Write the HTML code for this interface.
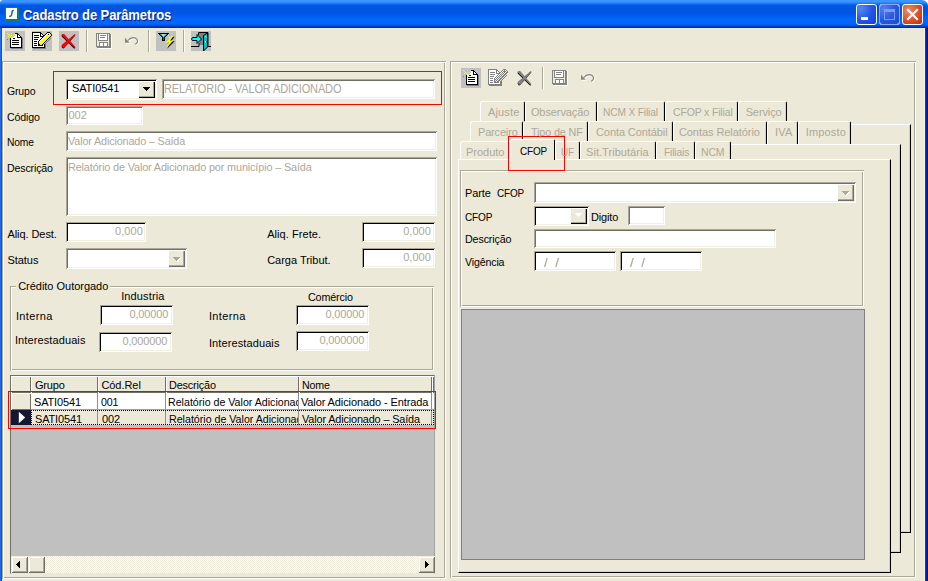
<!DOCTYPE html>
<html><head><meta charset="utf-8"><title>Cadastro de Parâmetros</title>
<style>
html,body{margin:0;padding:0}
body{width:928px;height:581px;overflow:hidden;background:#ECE9D8;position:relative;font-family:"Liberation Sans", sans-serif;font-size:11px}
#w div{position:absolute;box-sizing:border-box}
#w span{position:absolute;white-space:pre;transform-origin:0 0}
#w svg{position:absolute;overflow:visible}
</style></head><body><div id="w">
<div style="left:0px;top:0px;width:928px;height:8px;background:#fff;"></div>
<div style="left:0px;top:0px;width:928px;height:28px;background:linear-gradient(to bottom,#3D95FF 0px,#3A93FF 2px,#1B78F8 3.5px,#0058E6 5.5px,#0054DE 9px,#0057E5 14px,#0061F8 17px,#0068FF 20px,#0066FC 24px,#0052DD 25.5px,#0035B0 27px,#002A9A 28px);border-radius:3px 6px 0 0;"></div>
<div style="left:0px;top:28px;width:1px;height:553px;background:#1C6CF0;"></div>
<div style="left:1px;top:28px;width:1px;height:553px;background:#0453E2;"></div>
<div style="left:924px;top:28px;width:1px;height:553px;background:#FBF4D8;"></div>
<div style="left:925px;top:28px;width:1px;height:553px;background:#0838DD;"></div>
<div style="left:926px;top:28px;width:1px;height:553px;background:#0021B0;"></div>
<div style="left:927px;top:28px;width:1px;height:553px;background:#00138C;"></div>
<div style="left:5px;top:7px;width:14px;height:14px;background:#fff;border:1px solid #0F7B68;border-right-width:2px;border-bottom-width:2px;"><svg width="11" height="11" style="left:0;top:0"><path d="M7.800 2.400C6.300 2.200 6.100 3.300 6 4.500C5.900 6 5.800 7.300 5 7.800C4.400 8.200 3.800 8.300 3.100 8.500" stroke="#0F6B5C" stroke-width="1.500" fill="none"/></svg></div>
<div style="left:856px;top:4px;width:21px;height:21px;background:radial-gradient(circle at 20% 20%,#5a86f2,#2458e8 50%,#1040d4);border:1px solid #fff;border-radius:3px;"><div style="left:4px;top:12px;width:7px;height:3px;background:#fff"></div></div>
<div style="left:879px;top:4px;width:21px;height:21px;background:radial-gradient(circle at 20% 20%,#5580ee,#2a5ae0 50%,#1c48d0);border:1px solid #fff;border-radius:3px;"><div style="left:4px;top:4px;width:11px;height:11px;border:1px solid #7d9be8;border-top:3px solid #7d9be8"></div></div>
<div style="left:879px;top:4px;width:21px;height:21px;border:1px solid #8fa8ea;border-radius:3px;"></div>
<div style="left:902px;top:4px;width:21px;height:21px;background:radial-gradient(circle at 30% 30%,#ee8a6a,#d8502a 55%,#b8320f);border:1px solid #fff;border-radius:3px;"><svg width="19" height="19" style="left:0;top:0"><path d="M5 5l9 9M14 5l-9 9" stroke="#fff" stroke-width="2.2" stroke-linecap="square"/></svg></div>
<div style="left:5px;top:31px;width:20px;height:20px;background:#C0C0C0;"><svg width="20" height="20" viewBox="0 0 20 20" style="left:0;top:0" shape-rendering="crispEdges"><path fill="#ffff00" d="M2 2h1v1h-1zM6 2h1v1h-1zM3 3h1v1h-1zM9 3h1v1h-1zM4 4h1v1h-1zM6 4h1v1h-1zM8 4h1v1h-1zM3 5h1v1h-1zM5 5h1v1h-1zM6 6h2v1h-2zM6 8h1v1h-1z"/><path fill="#000" d="M10 2h3v1h-3zM12 3h2v1h-2zM12 4h1v1h-1zM14 4h1v1h-1zM12 5h1v1h-1zM15 5h1v1h-1zM12 6h5v1h-5zM5 7h1v1h-1zM8 7h2v1h-2zM16 7h1v1h-1zM5 8h1v1h-1zM16 8h1v1h-1zM5 9h1v1h-1zM7 9h7v1h-7zM16 9h1v1h-1zM5 10h1v1h-1zM16 10h1v1h-1zM5 11h1v1h-1zM7 11h7v1h-7zM16 11h1v1h-1zM5 12h1v1h-1zM16 12h1v1h-1zM5 13h1v1h-1zM7 13h7v1h-7zM16 13h1v1h-1zM5 14h1v1h-1zM16 14h1v1h-1zM5 15h1v1h-1zM16 15h1v1h-1zM5 16h12v1h-12z"/><path fill="#fff" d="M10 3h2v1h-2zM10 4h2v1h-2zM13 4h1v1h-1zM9 5h3v1h-3zM13 5h2v1h-2zM8 6h4v1h-4zM6 7h2v1h-2zM10 7h6v1h-6zM7 8h9v1h-9zM6 9h1v1h-1zM14 9h2v1h-2zM6 10h10v1h-10zM6 11h1v1h-1zM14 11h2v1h-2zM6 12h10v1h-10zM6 13h1v1h-1zM14 13h2v1h-2zM6 14h10v1h-10zM6 15h10v1h-10z"/><path fill="#808080" d="M17 7h1v1h-1zM2 8h1v1h-1zM17 8h1v1h-1zM17 9h1v1h-1zM17 10h1v1h-1zM17 11h1v1h-1zM17 12h1v1h-1zM17 13h1v1h-1zM17 14h1v1h-1zM17 15h1v1h-1zM17 16h1v1h-1zM6 17h12v1h-12z"/></svg></div>
<div style="left:32px;top:31px;width:20px;height:20px;background:#C0C0C0;"><svg width="20" height="20" viewBox="0 0 20 20" style="left:0;top:0" shape-rendering="crispEdges"><path fill="#000" d="M0 1h9v1h-9zM15 1h3v1h-3zM0 2h1v1h-1zM8 2h2v1h-2zM14 2h1v1h-1zM18 2h1v1h-1zM0 3h1v1h-1zM8 3h1v1h-1zM10 3h1v1h-1zM13 3h1v1h-1zM16 3h1v1h-1zM19 3h1v1h-1zM0 4h1v1h-1zM2 4h5v1h-5zM8 4h1v1h-1zM11 4h2v1h-2zM19 4h1v1h-1zM0 5h1v1h-1zM8 5h4v1h-4zM18 5h1v1h-1zM0 6h1v1h-1zM2 6h5v1h-5zM10 6h1v1h-1zM17 6h1v1h-1zM0 7h1v1h-1zM9 7h1v1h-1zM16 7h1v1h-1zM0 8h1v1h-1zM2 8h4v1h-4zM8 8h1v1h-1zM15 8h1v1h-1zM0 9h1v1h-1zM7 9h1v1h-1zM14 9h1v1h-1zM0 10h1v1h-1zM2 10h3v1h-3zM6 10h1v1h-1zM13 10h1v1h-1zM0 11h1v1h-1zM6 11h1v1h-1zM12 11h1v1h-1zM0 12h1v1h-1zM2 12h3v1h-3zM6 12h1v1h-1zM11 12h1v1h-1zM0 13h1v1h-1zM6 13h2v1h-2zM10 13h1v1h-1zM12 13h1v1h-1zM0 14h1v1h-1zM2 14h3v1h-3zM6 14h5v1h-5zM12 14h1v1h-1zM0 15h1v1h-1zM12 15h1v1h-1zM0 16h13v1h-13z"/><path fill="#fff" d="M1 2h7v1h-7zM1 3h7v1h-7zM9 3h1v1h-1zM14 3h1v1h-1zM1 4h1v1h-1zM7 4h1v1h-1zM9 4h2v1h-2zM13 4h1v1h-1zM1 5h7v1h-7zM12 5h1v1h-1zM1 6h1v1h-1zM7 6h3v1h-3zM11 6h1v1h-1zM1 7h8v1h-8zM10 7h1v1h-1zM1 8h1v1h-1zM6 8h2v1h-2zM9 8h1v1h-1zM1 9h6v1h-6zM8 9h1v1h-1zM1 10h1v1h-1zM5 10h1v1h-1zM7 10h1v1h-1zM1 11h5v1h-5zM1 12h1v1h-1zM5 12h1v1h-1zM1 13h5v1h-5zM1 14h1v1h-1zM5 14h1v1h-1zM11 14h1v1h-1zM1 15h11v1h-11z"/><path fill="#ffff00" d="M15 2h3v1h-3zM15 3h1v1h-1zM17 3h2v1h-2zM14 4h5v1h-5zM13 5h5v1h-5zM12 6h5v1h-5zM11 7h5v1h-5zM10 8h5v1h-5zM9 9h5v1h-5zM8 10h5v1h-5zM7 11h5v1h-5zM7 12h4v1h-4zM8 13h2v1h-2z"/><path fill="#808080" d="M18 7h1v1h-1zM17 8h1v1h-1zM16 9h1v1h-1zM15 10h1v1h-1zM14 11h1v1h-1zM13 12h1v1h-1zM13 13h1v1h-1zM13 14h1v1h-1zM13 15h1v1h-1zM13 16h1v1h-1zM1 17h13v1h-13z"/></svg></div>
<div style="left:59px;top:31px;width:20px;height:20px;background:#C0C0C0;"><svg width="20" height="20" viewBox="0 0 20 20" style="left:0;top:0" shape-rendering="crispEdges"><g shape-rendering="geometricPrecision"><path d="M3 3h2.200l11 12.800v.900h-.900l-12.300-12zM15.800 3l.800.800l-11.400 12.700l-.900.200l-1.300-1.300v-1.700z" fill="#000" transform="translate(-.3,.7)"/><path d="M3 3h2.200l11 12.800v.900h-.900l-12.300-12zM15.800 3l.800.800l-11.400 12.700l-.900.200l-1.300-1.300v-1.700z" fill="#ff0000"/></g></svg></div>
<div style="left:86px;top:30px;width:1px;height:22px;background:#ACA899;"></div>
<div style="left:87px;top:30px;width:1px;height:22px;background:#FFFFFF;"></div>
<div style="left:93px;top:31px;width:20px;height:20px;"><svg width="20" height="20" viewBox="0 0 20 20" style="left:0;top:0" shape-rendering="crispEdges"><path fill="#848480" d="M3 2h14v1h-14zM3 3h1v1h-1zM5 3h1v1h-1zM14 3h1v1h-1zM16 3h2v1h-2zM3 4h1v1h-1zM5 4h1v1h-1zM7 4h6v1h-6zM14 4h1v1h-1zM16 4h2v1h-2zM3 5h1v1h-1zM5 5h1v1h-1zM14 5h1v1h-1zM16 5h2v1h-2zM3 6h1v1h-1zM5 6h1v1h-1zM7 6h5v1h-5zM14 6h1v1h-1zM16 6h2v1h-2zM3 7h1v1h-1zM5 7h1v1h-1zM14 7h1v1h-1zM16 7h2v1h-2zM3 8h1v1h-1zM5 8h1v1h-1zM14 8h1v1h-1zM16 8h2v1h-2zM3 9h1v1h-1zM5 9h10v1h-10zM16 9h2v1h-2zM3 10h1v1h-1zM16 10h2v1h-2zM3 11h1v1h-1zM6 11h9v1h-9zM16 11h2v1h-2zM3 12h1v1h-1zM6 12h1v1h-1zM10 12h1v1h-1zM14 12h1v1h-1zM16 12h2v1h-2zM3 13h1v1h-1zM6 13h1v1h-1zM10 13h1v1h-1zM14 13h1v1h-1zM16 13h2v1h-2zM3 14h1v1h-1zM6 14h1v1h-1zM10 14h1v1h-1zM14 14h1v1h-1zM16 14h2v1h-2zM3 15h15v1h-15zM4 16h14v1h-14z"/><path fill="#fff" d="M6 3h8v1h-8zM18 3h1v1h-1zM6 4h1v1h-1zM13 4h1v1h-1zM18 4h1v1h-1zM6 5h8v1h-8zM18 5h1v1h-1zM6 6h1v1h-1zM12 6h2v1h-2zM18 6h1v1h-1zM6 7h8v1h-8zM18 7h1v1h-1zM6 8h8v1h-8zM18 8h1v1h-1zM18 9h1v1h-1zM18 10h1v1h-1zM18 11h1v1h-1zM7 12h3v1h-3zM11 12h3v1h-3zM18 12h1v1h-1zM7 13h3v1h-3zM11 13h3v1h-3zM18 13h1v1h-1zM7 14h3v1h-3zM11 14h3v1h-3zM18 14h1v1h-1zM18 15h1v1h-1zM18 16h1v1h-1zM5 17h14v1h-14z"/></svg></div>
<div style="left:0px;top:0px;width:0px;height:0px;"></div>
<div style="left:125px;top:37px;width:20px;height:20px;"><svg width="20" height="20" viewBox="0 0 20 20" style="left:0;top:0" shape-rendering="crispEdges"><g shape-rendering="geometricPrecision"><g transform="translate(1,1)"><path d="M0 .800l4.700 5h-4.700z" fill="#fff"/><path d="M3 3.500C4.500 1.500 7 .300 9.500 .800S13 3.500 12.300 5.200S10.800 6.800 10 7.200" fill="none" stroke="#fff" stroke-width="1.200"/></g><path d="M0 .800l4.700 5h-4.700z" fill="#848480"/><path d="M3 3.500C4.500 1.500 7 .300 9.500 .800S13 3.500 12.300 5.200S10.800 6.800 10 7.200" fill="none" stroke="#848480" stroke-width="1.200"/></g></svg></div>
<div style="left:148px;top:30px;width:1px;height:22px;background:#ACA899;"></div>
<div style="left:149px;top:30px;width:1px;height:22px;background:#FFFFFF;"></div>
<div style="left:156px;top:31px;width:20px;height:20px;background:#C0C0C0;"><svg width="20" height="20" viewBox="0 0 20 20" style="left:0;top:0" shape-rendering="crispEdges"><g shape-rendering="crispEdges"><path fill="#000" d="M2 2h11v1h-11zM3 3h1v1h-1zM11 3h1v1h-1zM4 4h1v1h-1zM10 4h1v1h-1zM5 5h1v1h-1zM9 5h1v1h-1zM6 6h1v1h-1zM8 6h1v1h-1zM6 7h1v1h-1zM8 7h1v1h-1zM6 8h1v1h-1zM8 8h1v1h-1zM6 9h3v1h-3z"/><path fill="#008080" d="M4 3h1v1h-1zM10 3h1v1h-1zM5 4h1v1h-1zM9 4h1v1h-1zM6 5h1v1h-1zM8 5h1v1h-1zM7 6h1v1h-1zM7 7h1v1h-1zM7 8h1v1h-1z"/></g><g shape-rendering="geometricPrecision"><path d="M9.500 10.500l1 1.500M12.500 4.500l1.500 3.500" stroke="#e4e4e4" stroke-width="1"/><path d="M15.500 5h2l-3.500 4.500h3.500l-7.500 7.500l2.800-5.500h-2.500z" fill="#000" transform="translate(1.100,.800)"/><path d="M15.500 5h2l-3.500 4.500h3.500l-7.500 7.500l2.800-5.500h-2.500z" fill="#ffff00"/></g></svg></div>
<div style="left:183px;top:30px;width:1px;height:22px;background:#ACA899;"></div>
<div style="left:184px;top:30px;width:1px;height:22px;background:#FFFFFF;"></div>
<div style="left:191px;top:31px;width:20px;height:20px;background:#C0C0C0;"><svg width="20" height="20" viewBox="0 0 20 20" style="left:0;top:0" shape-rendering="crispEdges"><g shape-rendering="geometricPrecision"><path d="M8 2h8v12h-8z" fill="#808080"/><path d="M7.500 4v-2.500h9.500v14.500" fill="none" stroke="#000" stroke-width="1"/><path d="M0 15.500h8v-3.500M17 15.500h3" fill="none" stroke="#000" stroke-width="1"/><path d="M12.500 4.500l4-2.500v14l-4 4z" fill="#00c0c0" stroke="#000" stroke-width="1"/><path d="M13.500 5.500l2-1.300v3z" fill="#00ffff"/><path d="M14 10h1v1.500h-1z" fill="#fff"/><path d="M15 10h.7v1.500h-.7z" fill="#004080"/><path d="M1.500 6.500h4.500v-3l4.500 4.500-4.500 4.500v-3h-4.500l-1-1.500z" fill="#00ffff" stroke="#000" stroke-width="1" stroke-linejoin="round"/></g></svg></div>
<div style="left:2px;top:61px;width:444px;height:518px;box-shadow:inset 1px 1px 0 #ACA899,inset -1px -1px 0 #FFFFFF,inset 2px 2px 0 #FFFFFF,inset -2px -2px 0 #ACA899;"></div>
<div style="left:66px;top:79px;width:91px;height:21px;background:#FFFFFF;box-shadow:inset 1px 1px 0 #ACA899,inset -1px -1px 0 #FFFFFF,inset 2px 2px 0 #000,inset -2px -2px 0 #F1EFE2;"></div>
<div style="left:138px;top:81px;width:17px;height:17px;background:#ECE9D8;box-shadow:inset 1px 1px 0 #FFFFFF,inset -1px -1px 0 #000,inset -2px -2px 0 #ACA899;"><svg width="17" height="17" style="position:absolute;left:0;top:0" shape-rendering="crispEdges"><path d="M5 6h7v1h-7zM6 7h5v1h-5zM7 8h3v1h-3zM8 9h1v1h-1z" fill="#000"/></svg></div>
<div style="left:162px;top:79px;width:273px;height:20px;background:#FFFFFF;box-shadow:inset 1px 1px 0 #ACA899,inset -1px -1px 0 #FFFFFF,inset 2px 2px 0 #716F64,inset -2px -2px 0 #F1EFE2;"></div>
<div style="left:66px;top:106px;width:77px;height:19px;background:#FFFFFF;box-shadow:inset 1px 1px 0 #ACA899,inset -1px -1px 0 #FFFFFF,inset 2px 2px 0 #716F64,inset -2px -2px 0 #F1EFE2;"></div>
<div style="left:66px;top:131px;width:371px;height:20px;background:#FFFFFF;box-shadow:inset 1px 1px 0 #ACA899,inset -1px -1px 0 #FFFFFF,inset 2px 2px 0 #716F64,inset -2px -2px 0 #F1EFE2;"></div>
<div style="left:66px;top:157px;width:371px;height:59px;background:#FFFFFF;box-shadow:inset 1px 1px 0 #ACA899,inset -1px -1px 0 #FFFFFF,inset 2px 2px 0 #716F64,inset -2px -2px 0 #F1EFE2;"></div>
<div style="left:66px;top:222px;width:80px;height:20px;background:#FFFFFF;box-shadow:inset 1px 1px 0 #ACA899,inset -1px -1px 0 #FFFFFF,inset 2px 2px 0 #000,inset -2px -2px 0 #F1EFE2;"></div>
<div style="left:362px;top:222px;width:73px;height:20px;background:#FFFFFF;box-shadow:inset 1px 1px 0 #ACA899,inset -1px -1px 0 #FFFFFF,inset 2px 2px 0 #000,inset -2px -2px 0 #F1EFE2;"></div>
<div style="left:66px;top:248px;width:121px;height:21px;background:#FFFFFF;box-shadow:inset 1px 1px 0 #ACA899,inset -1px -1px 0 #FFFFFF,inset 2px 2px 0 #716F64,inset -2px -2px 0 #F1EFE2;"></div>
<div style="left:168px;top:250px;width:17px;height:17px;background:#ECE9D8;box-shadow:inset 1px 1px 0 #FFFFFF,inset -1px -1px 0 #716F64,inset -2px -2px 0 #ACA899;"><svg width="17" height="17" style="position:absolute;left:0;top:0" shape-rendering="crispEdges"><path d="M6 8h7v1h-7zM7 9h5v1h-5zM8 10h3v1h-3zM9 11h1v1h-1z" fill="#FFFFFF"/><path d="M5 7h7v1h-7zM6 8h5v1h-5zM7 9h3v1h-3zM8 10h1v1h-1z" fill="#ACA899"/></svg></div>
<div style="left:362px;top:248px;width:73px;height:20px;background:#FFFFFF;box-shadow:inset 1px 1px 0 #ACA899,inset -1px -1px 0 #FFFFFF,inset 2px 2px 0 #000,inset -2px -2px 0 #F1EFE2;"></div>
<div style="left:10px;top:286px;width:424px;height:85px;box-shadow:inset 1px 1px 0 #ACA899,inset -1px -1px 0 #FFFFFF,inset 2px 2px 0 #FFFFFF,inset -2px -2px 0 #ACA899;"></div>
<div style="left:16px;top:280px;width:94px;height:12px;background:#ECE9D8;"></div>
<div style="left:100px;top:305px;width:73px;height:20px;background:#FFFFFF;box-shadow:inset 1px 1px 0 #ACA899,inset -1px -1px 0 #FFFFFF,inset 2px 2px 0 #000,inset -2px -2px 0 #F1EFE2;"></div>
<div style="left:99px;top:332px;width:73px;height:20px;background:#FFFFFF;box-shadow:inset 1px 1px 0 #ACA899,inset -1px -1px 0 #FFFFFF,inset 2px 2px 0 #000,inset -2px -2px 0 #F1EFE2;"></div>
<div style="left:296px;top:305px;width:73px;height:20px;background:#FFFFFF;box-shadow:inset 1px 1px 0 #ACA899,inset -1px -1px 0 #FFFFFF,inset 2px 2px 0 #000,inset -2px -2px 0 #F1EFE2;"></div>
<div style="left:296px;top:331px;width:73px;height:20px;background:#FFFFFF;box-shadow:inset 1px 1px 0 #ACA899,inset -1px -1px 0 #FFFFFF,inset 2px 2px 0 #000,inset -2px -2px 0 #F1EFE2;"></div>
<div style="left:10px;top:375px;width:425px;height:199px;background:#C0C0C0;border:1px solid #716F64;border-right:1px solid #a4a4a4;border-bottom:1px solid #ECE9D8;"></div>
<div style="left:11px;top:376px;width:20px;height:17px;background:#ECE9D8;box-shadow:inset 1px 1px 0 #FFFFFF,inset -1px -1px 0 #716F64;"></div>
<div style="left:31px;top:376px;width:67px;height:17px;background:#ECE9D8;box-shadow:inset 1px 1px 0 #FFFFFF,inset -1px -1px 0 #716F64;"></div>
<div style="left:98px;top:376px;width:68px;height:17px;background:#ECE9D8;box-shadow:inset 1px 1px 0 #FFFFFF,inset -1px -1px 0 #716F64;"></div>
<div style="left:166px;top:376px;width:133px;height:17px;background:#ECE9D8;box-shadow:inset 1px 1px 0 #FFFFFF,inset -1px -1px 0 #716F64;"></div>
<div style="left:299px;top:376px;width:133px;height:17px;background:#ECE9D8;box-shadow:inset 1px 1px 0 #FFFFFF,inset -1px -1px 0 #716F64;"></div>
<div style="left:432px;top:376px;width:2px;height:17px;background:#ECE9D8;box-shadow:inset 1px 1px 0 #FFFFFF,inset -1px -1px 0 #716F64;"></div>
<div style="left:11px;top:393px;width:20px;height:17px;background:#ECE9D8;box-shadow:inset 1px 1px 0 #FFFFFF,inset -1px -1px 0 #716F64;"></div>
<div style="left:31px;top:393px;width:403px;height:17px;background:#FFFFFF;"></div>
<div style="left:97px;top:393px;width:1px;height:17px;background:#909090;"></div>
<div style="left:165px;top:393px;width:1px;height:17px;background:#909090;"></div>
<div style="left:298px;top:393px;width:1px;height:17px;background:#909090;"></div>
<div style="left:431px;top:393px;width:1px;height:17px;background:#909090;"></div>
<div style="left:31px;top:409px;width:403px;height:1px;background:#a0a0a0;"></div>
<div style="left:166px;top:393px;width:132px;height:16px;overflow:hidden;"><span style="left:2px;top:3px;transform:scaleX(0.967)">Relatório de Valor Adicionado</span></div>
<div style="left:11px;top:410px;width:20px;height:15px;background:#14172f;"><svg width="20" height="15" style="left:0;top:0"><path d="M7.800 1.800l6.400 5.700-6.400 5.700z" fill="#fff"/></svg></div>
<div style="left:31px;top:410px;width:403px;height:15px;background:#ECE9D8;"></div>
<div style="left:97px;top:410px;width:1px;height:15px;background:#909090;"></div>
<div style="left:165px;top:410px;width:1px;height:15px;background:#909090;"></div>
<div style="left:298px;top:410px;width:1px;height:15px;background:#909090;"></div>
<div style="left:431px;top:410px;width:1px;height:15px;background:#909090;"></div>
<div style="left:31px;top:410px;width:403px;height:15px;border:1px dotted #000;"></div>
<div style="left:166px;top:410px;width:132px;height:15px;overflow:hidden;"><span style="left:2.9px;top:3px;transform:scaleX(0.967)">Relatório de Valor Adicionado</span></div>
<div style="left:11px;top:556px;width:424px;height:17px;background:#F6F5EE;background-image:repeating-conic-gradient(#ECE9D8 0 25%,#fff 0 50%);background-size:2px 2px;"></div>
<div style="left:11px;top:556px;width:17px;height:17px;background:#ECE9D8;box-shadow:inset 1px 1px 0 #F1EFE2,inset -1px -1px 0 #716F64,inset 2px 2px 0 #FFFFFF,inset -2px -2px 0 #ACA899;"><svg width="17" height="17" style="left:0;top:0" shape-rendering="crispEdges"><path d="M8 5h1v7h-1zM7 6h1v5h-1zM6 7h1v3h-1zM5 8h1v1h-1z" fill="#000"/></svg></div>
<div style="left:28px;top:556px;width:17px;height:17px;background:#ECE9D8;box-shadow:inset 1px 1px 0 #F1EFE2,inset -1px -1px 0 #716F64,inset 2px 2px 0 #FFFFFF,inset -2px -2px 0 #ACA899;"></div>
<div style="left:418px;top:556px;width:17px;height:17px;background:#ECE9D8;box-shadow:inset 1px 1px 0 #F1EFE2,inset -1px -1px 0 #716F64,inset 2px 2px 0 #FFFFFF,inset -2px -2px 0 #ACA899;"><svg width="17" height="17" style="left:0;top:0" shape-rendering="crispEdges"><path d="M7 5h1v7h-1zM8 6h1v5h-1zM9 7h1v3h-1zM10 8h1v1h-1z" fill="#000"/></svg></div>
<div style="left:450px;top:61px;width:466px;height:517px;box-shadow:inset 1px 1px 0 #ACA899,inset -1px -1px 0 #FFFFFF,inset 2px 2px 0 #FFFFFF,inset -2px -2px 0 #ACA899;"></div>
<div style="left:461px;top:68px;width:20px;height:20px;background:#C0C0C0;"><svg width="20" height="20" viewBox="0 0 20 20" style="left:0;top:0" shape-rendering="crispEdges"><path fill="#ffff00" d="M2 2h1v1h-1zM6 2h1v1h-1zM3 3h1v1h-1zM9 3h1v1h-1zM4 4h1v1h-1zM6 4h1v1h-1zM8 4h1v1h-1zM3 5h1v1h-1zM5 5h1v1h-1zM6 6h2v1h-2zM6 8h1v1h-1z"/><path fill="#000" d="M10 2h3v1h-3zM12 3h2v1h-2zM12 4h1v1h-1zM14 4h1v1h-1zM12 5h1v1h-1zM15 5h1v1h-1zM12 6h5v1h-5zM5 7h1v1h-1zM8 7h2v1h-2zM16 7h1v1h-1zM5 8h1v1h-1zM16 8h1v1h-1zM5 9h1v1h-1zM7 9h7v1h-7zM16 9h1v1h-1zM5 10h1v1h-1zM16 10h1v1h-1zM5 11h1v1h-1zM7 11h7v1h-7zM16 11h1v1h-1zM5 12h1v1h-1zM16 12h1v1h-1zM5 13h1v1h-1zM7 13h7v1h-7zM16 13h1v1h-1zM5 14h1v1h-1zM16 14h1v1h-1zM5 15h1v1h-1zM16 15h1v1h-1zM5 16h12v1h-12z"/><path fill="#fff" d="M10 3h2v1h-2zM10 4h2v1h-2zM13 4h1v1h-1zM9 5h3v1h-3zM13 5h2v1h-2zM8 6h4v1h-4zM6 7h2v1h-2zM10 7h6v1h-6zM7 8h9v1h-9zM6 9h1v1h-1zM14 9h2v1h-2zM6 10h10v1h-10zM6 11h1v1h-1zM14 11h2v1h-2zM6 12h10v1h-10zM6 13h1v1h-1zM14 13h2v1h-2zM6 14h10v1h-10zM6 15h10v1h-10z"/><path fill="#808080" d="M17 7h1v1h-1zM2 8h1v1h-1zM17 8h1v1h-1zM17 9h1v1h-1zM17 10h1v1h-1zM17 11h1v1h-1zM17 12h1v1h-1zM17 13h1v1h-1zM17 14h1v1h-1zM17 15h1v1h-1zM17 16h1v1h-1zM6 17h12v1h-12z"/></svg></div>
<div style="left:488px;top:68px;width:20px;height:20px;"><svg width="20" height="20" viewBox="0 0 20 20" style="left:0;top:0" shape-rendering="crispEdges"><path fill="#808080" d="M0 1h9v1h-9zM15 1h3v1h-3zM0 2h1v1h-1zM8 2h2v1h-2zM14 2h1v1h-1zM16 2h1v1h-1zM18 2h1v1h-1zM0 3h1v1h-1zM8 3h1v1h-1zM10 3h1v1h-1zM13 3h1v1h-1zM15 3h3v1h-3zM19 3h1v1h-1zM0 4h1v1h-1zM2 4h5v1h-5zM8 4h1v1h-1zM11 4h2v1h-2zM14 4h1v1h-1zM16 4h1v1h-1zM18 4h2v1h-2zM0 5h1v1h-1zM8 5h4v1h-4zM13 5h1v1h-1zM15 5h1v1h-1zM17 5h2v1h-2zM0 6h1v1h-1zM2 6h5v1h-5zM10 6h1v1h-1zM12 6h1v1h-1zM14 6h1v1h-1zM16 6h2v1h-2zM0 7h1v1h-1zM9 7h1v1h-1zM11 7h1v1h-1zM13 7h1v1h-1zM15 7h2v1h-2zM18 7h1v1h-1zM0 8h1v1h-1zM2 8h4v1h-4zM8 8h1v1h-1zM10 8h1v1h-1zM12 8h1v1h-1zM14 8h2v1h-2zM17 8h1v1h-1zM0 9h1v1h-1zM7 9h1v1h-1zM9 9h1v1h-1zM11 9h1v1h-1zM13 9h2v1h-2zM16 9h1v1h-1zM0 10h1v1h-1zM2 10h3v1h-3zM6 10h1v1h-1zM8 10h1v1h-1zM10 10h1v1h-1zM12 10h2v1h-2zM15 10h1v1h-1zM0 11h1v1h-1zM6 11h2v1h-2zM9 11h1v1h-1zM11 11h2v1h-2zM14 11h1v1h-1zM0 12h1v1h-1zM2 12h3v1h-3zM6 12h1v1h-1zM8 12h1v1h-1zM10 12h2v1h-2zM13 12h1v1h-1zM0 13h1v1h-1zM6 13h2v1h-2zM9 13h2v1h-2zM12 13h2v1h-2zM0 14h1v1h-1zM2 14h3v1h-3zM6 14h5v1h-5zM12 14h2v1h-2zM0 15h1v1h-1zM12 15h2v1h-2zM0 16h14v1h-14zM1 17h13v1h-13z"/><path fill="#fff" d="M1 2h7v1h-7zM1 3h7v1h-7zM9 3h1v1h-1zM14 3h1v1h-1zM1 4h1v1h-1zM7 4h1v1h-1zM9 4h2v1h-2zM13 4h1v1h-1zM1 5h7v1h-7zM12 5h1v1h-1zM1 6h1v1h-1zM7 6h3v1h-3zM11 6h1v1h-1zM1 7h8v1h-8zM10 7h1v1h-1zM1 8h1v1h-1zM6 8h2v1h-2zM9 8h1v1h-1zM1 9h6v1h-6zM8 9h1v1h-1zM1 10h1v1h-1zM5 10h1v1h-1zM7 10h1v1h-1zM1 11h5v1h-5zM1 12h1v1h-1zM5 12h1v1h-1zM1 13h5v1h-5zM1 14h1v1h-1zM5 14h1v1h-1zM11 14h1v1h-1zM1 15h11v1h-11z"/></svg></div>
<div style="left:515px;top:68px;width:20px;height:20px;"><svg width="20" height="20" viewBox="0 0 20 20" style="left:0;top:0" shape-rendering="crispEdges"><g shape-rendering="geometricPrecision"><path d="M3 3h2.200l11 12.800v.900h-.900l-12.300-12zM15.800 3l.800.800l-11.400 12.700l-.900.200l-1.300-1.300v-1.700z" fill="#000" transform="translate(-.3,.7)"/><path d="M3 3h2.200l11 12.800v.900h-.900l-12.300-12zM15.800 3l.800.800l-11.400 12.700l-.900.200l-1.300-1.300v-1.700z" fill="#808080"/></g></svg></div>
<div style="left:542px;top:67px;width:1px;height:22px;background:#ACA899;"></div>
<div style="left:543px;top:67px;width:1px;height:22px;background:#FFFFFF;"></div>
<div style="left:549px;top:68px;width:20px;height:20px;"><svg width="20" height="20" viewBox="0 0 20 20" style="left:0;top:0" shape-rendering="crispEdges"><path fill="#848480" d="M3 2h14v1h-14zM3 3h1v1h-1zM5 3h1v1h-1zM14 3h1v1h-1zM16 3h2v1h-2zM3 4h1v1h-1zM5 4h1v1h-1zM7 4h6v1h-6zM14 4h1v1h-1zM16 4h2v1h-2zM3 5h1v1h-1zM5 5h1v1h-1zM14 5h1v1h-1zM16 5h2v1h-2zM3 6h1v1h-1zM5 6h1v1h-1zM7 6h5v1h-5zM14 6h1v1h-1zM16 6h2v1h-2zM3 7h1v1h-1zM5 7h1v1h-1zM14 7h1v1h-1zM16 7h2v1h-2zM3 8h1v1h-1zM5 8h1v1h-1zM14 8h1v1h-1zM16 8h2v1h-2zM3 9h1v1h-1zM5 9h10v1h-10zM16 9h2v1h-2zM3 10h1v1h-1zM16 10h2v1h-2zM3 11h1v1h-1zM6 11h9v1h-9zM16 11h2v1h-2zM3 12h1v1h-1zM6 12h1v1h-1zM10 12h1v1h-1zM14 12h1v1h-1zM16 12h2v1h-2zM3 13h1v1h-1zM6 13h1v1h-1zM10 13h1v1h-1zM14 13h1v1h-1zM16 13h2v1h-2zM3 14h1v1h-1zM6 14h1v1h-1zM10 14h1v1h-1zM14 14h1v1h-1zM16 14h2v1h-2zM3 15h15v1h-15zM4 16h14v1h-14z"/><path fill="#fff" d="M6 3h8v1h-8zM18 3h1v1h-1zM6 4h1v1h-1zM13 4h1v1h-1zM18 4h1v1h-1zM6 5h8v1h-8zM18 5h1v1h-1zM6 6h1v1h-1zM12 6h2v1h-2zM18 6h1v1h-1zM6 7h8v1h-8zM18 7h1v1h-1zM6 8h8v1h-8zM18 8h1v1h-1zM18 9h1v1h-1zM18 10h1v1h-1zM18 11h1v1h-1zM7 12h3v1h-3zM11 12h3v1h-3zM18 12h1v1h-1zM7 13h3v1h-3zM11 13h3v1h-3zM18 13h1v1h-1zM7 14h3v1h-3zM11 14h3v1h-3zM18 14h1v1h-1zM18 15h1v1h-1zM18 16h1v1h-1zM5 17h14v1h-14z"/></svg></div>
<div style="left:581px;top:74px;width:20px;height:20px;"><svg width="20" height="20" viewBox="0 0 20 20" style="left:0;top:0" shape-rendering="crispEdges"><g shape-rendering="geometricPrecision"><g transform="translate(1,1)"><path d="M0 .800l4.700 5h-4.700z" fill="#fff"/><path d="M3 3.500C4.500 1.500 7 .300 9.500 .800S13 3.500 12.300 5.200S10.800 6.800 10 7.200" fill="none" stroke="#fff" stroke-width="1.200"/></g><path d="M0 .800l4.700 5h-4.700z" fill="#848480"/><path d="M3 3.500C4.500 1.500 7 .300 9.500 .800S13 3.500 12.300 5.200S10.800 6.800 10 7.200" fill="none" stroke="#848480" stroke-width="1.200"/></g></svg></div>
<div style="left:470px;top:124px;width:441px;height:409px;background:#ECE9D8;border-top:1px solid #FFFFFF;border-left:1px solid #FFFFFF;border-right:1px solid #000;border-bottom:1px solid #000;box-shadow:inset -1px -1px 0 #D6D2C2;"></div>
<div style="left:480px;top:101px;width:45px;height:23px;background:#ECE9D8;border-top:1px solid #FFFFFF;border-left:1px solid #FFFFFF;border-right:1px solid #000;border-radius:3px 2px 0 0;box-shadow:inset -1px 0 0 #D6D2C2;"></div>
<div style="left:525px;top:101px;width:72px;height:23px;background:#ECE9D8;border-top:1px solid #FFFFFF;border-left:1px solid #FFFFFF;border-right:1px solid #000;border-radius:3px 2px 0 0;box-shadow:inset -1px 0 0 #D6D2C2;"></div>
<div style="left:597px;top:101px;width:68px;height:23px;background:#ECE9D8;border-top:1px solid #FFFFFF;border-left:1px solid #FFFFFF;border-right:1px solid #000;border-radius:3px 2px 0 0;box-shadow:inset -1px 0 0 #D6D2C2;"></div>
<div style="left:665px;top:101px;width:73px;height:23px;background:#ECE9D8;border-top:1px solid #FFFFFF;border-left:1px solid #FFFFFF;border-right:1px solid #000;border-radius:3px 2px 0 0;box-shadow:inset -1px 0 0 #D6D2C2;"></div>
<div style="left:738px;top:101px;width:49px;height:23px;background:#ECE9D8;border-top:1px solid #FFFFFF;border-left:1px solid #FFFFFF;border-right:1px solid #000;border-radius:3px 2px 0 0;box-shadow:inset -1px 0 0 #D6D2C2;"></div>
<div style="left:470px;top:121px;width:53px;height:23px;background:#ECE9D8;border-top:1px solid #FFFFFF;border-left:1px solid #FFFFFF;border-right:1px solid #000;border-radius:3px 2px 0 0;box-shadow:inset -1px 0 0 #D6D2C2;"></div>
<div style="left:523px;top:121px;width:65px;height:23px;background:#ECE9D8;border-top:1px solid #FFFFFF;border-left:1px solid #FFFFFF;border-right:1px solid #000;border-radius:3px 2px 0 0;box-shadow:inset -1px 0 0 #D6D2C2;"></div>
<div style="left:588px;top:121px;width:85px;height:23px;background:#ECE9D8;border-top:1px solid #FFFFFF;border-left:1px solid #FFFFFF;border-right:1px solid #000;border-radius:3px 2px 0 0;box-shadow:inset -1px 0 0 #D6D2C2;"></div>
<div style="left:673px;top:121px;width:94px;height:23px;background:#ECE9D8;border-top:1px solid #FFFFFF;border-left:1px solid #FFFFFF;border-right:1px solid #000;border-radius:3px 2px 0 0;box-shadow:inset -1px 0 0 #D6D2C2;"></div>
<div style="left:767px;top:121px;width:31px;height:23px;background:#ECE9D8;border-top:1px solid #FFFFFF;border-left:1px solid #FFFFFF;border-right:1px solid #000;border-radius:3px 2px 0 0;box-shadow:inset -1px 0 0 #D6D2C2;"></div>
<div style="left:798px;top:121px;width:53px;height:23px;background:#ECE9D8;border-top:1px solid #FFFFFF;border-left:1px solid #FFFFFF;border-right:1px solid #000;border-radius:3px 2px 0 0;box-shadow:inset -1px 0 0 #D6D2C2;"></div>
<div style="left:460px;top:144px;width:441px;height:409px;background:#ECE9D8;border-top:1px solid #FFFFFF;border-left:1px solid #FFFFFF;border-right:1px solid #000;border-bottom:1px solid #000;box-shadow:inset -1px -1px 0 #D6D2C2;"></div>
<div style="left:460px;top:141px;width:53px;height:19px;background:#ECE9D8;border-top:1px solid #FFFFFF;border-left:1px solid #FFFFFF;border-right:1px solid #000;border-radius:3px 2px 0 0;box-shadow:inset -1px 0 0 #D6D2C2;"></div>
<div style="left:555px;top:141px;width:25px;height:19px;background:#ECE9D8;border-top:1px solid #FFFFFF;border-left:1px solid #FFFFFF;border-right:1px solid #000;border-radius:3px 2px 0 0;box-shadow:inset -1px 0 0 #D6D2C2;"></div>
<div style="left:580px;top:141px;width:76px;height:19px;background:#ECE9D8;border-top:1px solid #FFFFFF;border-left:1px solid #FFFFFF;border-right:1px solid #000;border-radius:3px 2px 0 0;box-shadow:inset -1px 0 0 #D6D2C2;"></div>
<div style="left:656px;top:141px;width:39px;height:19px;background:#ECE9D8;border-top:1px solid #FFFFFF;border-left:1px solid #FFFFFF;border-right:1px solid #000;border-radius:3px 2px 0 0;box-shadow:inset -1px 0 0 #D6D2C2;"></div>
<div style="left:695px;top:141px;width:36px;height:19px;background:#ECE9D8;border-top:1px solid #FFFFFF;border-left:1px solid #FFFFFF;border-right:1px solid #000;border-radius:3px 2px 0 0;box-shadow:inset -1px 0 0 #D6D2C2;"></div>
<div style="left:458px;top:159px;width:433px;height:414px;background:#ECE9D8;border-top:1px solid #FFFFFF;border-left:1px solid #FFFFFF;border-right:1px solid #000;border-bottom:1px solid #000;box-shadow:inset -1px -1px 0 #D6D2C2;"></div>
<div style="left:510px;top:139px;width:45px;height:22px;background:#ECE9D8;border-top:1px solid #FFFFFF;border-left:1px solid #FFFFFF;border-right:1px solid #000;border-radius:3px 2px 0 0;"></div>
<div style="left:511px;top:159px;width:43px;height:2px;background:#ECE9D8;"></div>
<div style="left:554px;top:160px;width:1px;height:1px;background:#ECE9D8;"></div>
<div style="left:460px;top:170px;width:404px;height:137px;box-shadow:inset 1px 1px 0 #ACA899,inset -1px -1px 0 #FFFFFF,inset 2px 2px 0 #FFFFFF,inset -2px -2px 0 #ACA899;"></div>
<div style="left:534px;top:182px;width:322px;height:21px;background:#FFFFFF;box-shadow:inset 1px 1px 0 #ACA899,inset -1px -1px 0 #FFFFFF,inset 2px 2px 0 #716F64,inset -2px -2px 0 #F1EFE2;"></div>
<div style="left:837px;top:184px;width:17px;height:17px;background:#ECE9D8;box-shadow:inset 1px 1px 0 #FFFFFF,inset -1px -1px 0 #716F64,inset -2px -2px 0 #ACA899;"><svg width="17" height="17" style="position:absolute;left:0;top:0" shape-rendering="crispEdges"><path d="M6 8h7v1h-7zM7 9h5v1h-5zM8 10h3v1h-3zM9 11h1v1h-1z" fill="#FFFFFF"/><path d="M5 7h7v1h-7zM6 8h5v1h-5zM7 9h3v1h-3zM8 10h1v1h-1z" fill="#ACA899"/></svg></div>
<div style="left:534px;top:206px;width:55px;height:20px;background:#FFFFFF;box-shadow:inset 1px 1px 0 #ACA899,inset -1px -1px 0 #FFFFFF,inset 2px 2px 0 #000,inset -2px -2px 0 #F1EFE2;"></div>
<div style="left:570px;top:208px;width:17px;height:16px;background:#ECE9D8;box-shadow:inset 1px 1px 0 #FFFFFF,inset -1px -1px 0 #000,inset -2px -2px 0 #ACA899;"><svg width="17" height="16" style="position:absolute;left:0;top:0" shape-rendering="crispEdges"><path d="M5 5h7v1h-7zM6 6h5v1h-5zM7 7h3v1h-3zM8 8h1v1h-1z" fill="#FFFFFF"/></svg></div>
<div style="left:628px;top:206px;width:37px;height:19px;background:#FFFFFF;box-shadow:inset 1px 1px 0 #ACA899,inset -1px -1px 0 #FFFFFF,inset 2px 2px 0 #716F64,inset -2px -2px 0 #F1EFE2;"></div>
<div style="left:534px;top:229px;width:242px;height:19px;background:#FFFFFF;box-shadow:inset 1px 1px 0 #ACA899,inset -1px -1px 0 #FFFFFF,inset 2px 2px 0 #716F64,inset -2px -2px 0 #F1EFE2;"></div>
<div style="left:534px;top:251px;width:82px;height:20px;background:#FFFFFF;box-shadow:inset 1px 1px 0 #ACA899,inset -1px -1px 0 #FFFFFF,inset 2px 2px 0 #000,inset -2px -2px 0 #F1EFE2;"></div>
<div style="left:620px;top:251px;width:82px;height:20px;background:#FFFFFF;box-shadow:inset 1px 1px 0 #ACA899,inset -1px -1px 0 #FFFFFF,inset 2px 2px 0 #000,inset -2px -2px 0 #F1EFE2;"></div>
<div style="left:461px;top:309px;width:404px;height:251px;background:#C0C0C0;border:1px solid #808080;"></div>
<div style="left:53px;top:71px;width:389px;height:34px;border:1px solid #ff0000;"></div>
<div style="left:8px;top:391px;width:428px;height:38px;border:1px solid #ff0000;"></div>
<div style="left:508px;top:136px;width:57px;height:35px;border:1px solid #ff0000;"></div>
<span style="left:22.7px;top:7.00px;font-size:14px;line-height:16px;font-weight:bold;color:#fff;letter-spacing:-0.15px;transform:scaleX(0.9345);text-shadow:1px 1px 0 #0a1a78;">Cadastro de Parâmetros</span>
<span style="left:7.4px;top:85.00px;font-size:11px;line-height:13px;font-weight:normal;color:#000;letter-spacing:-0.15px;transform:scaleX(0.9507);">Grupo</span>
<span style="left:71.9px;top:82.00px;font-size:11px;line-height:13px;font-weight:normal;color:#000;letter-spacing:-0.09px;">SATI0541</span>
<span style="left:164.4px;top:82.00px;font-size:12px;line-height:14px;font-weight:normal;color:#ACA899;letter-spacing:-0.15px;transform:scaleX(0.9181);">RELATORIO - VALOR ADICIONADO</span>
<span style="left:7.4px;top:111.00px;font-size:11px;line-height:13px;font-weight:normal;color:#000;letter-spacing:-0.15px;transform:scaleX(0.9675);">Código</span>
<span style="left:68.4px;top:109.00px;font-size:11px;line-height:13px;font-weight:normal;color:#ACA899;letter-spacing:0.07px;">002</span>
<span style="left:7.4px;top:136.00px;font-size:11px;line-height:13px;font-weight:normal;color:#000;letter-spacing:-0.15px;transform:scaleX(0.9345);">Nome</span>
<span style="left:68.15px;top:135.00px;font-size:11px;line-height:13px;font-weight:normal;color:#ACA899;letter-spacing:-0.15px;transform:scaleX(0.9831);">Valor Adicionado – Saída</span>
<span style="left:7.4px;top:162.00px;font-size:11px;line-height:13px;font-weight:normal;color:#000;letter-spacing:-0.15px;transform:scaleX(0.9642);">Descrição</span>
<span style="left:68.15px;top:161.00px;font-size:11px;line-height:13px;font-weight:normal;color:#ACA899;letter-spacing:-0.15px;transform:scaleX(0.9881);">Relatório de Valor Adicionado por município – Saída</span>
<span style="left:7.4px;top:228.00px;font-size:11px;line-height:13px;font-weight:normal;color:#000;letter-spacing:-0.06px;">Aliq. Dest.</span>
<span style="left:114.9px;top:225.00px;font-size:11px;line-height:13px;font-weight:normal;color:#ACA899;letter-spacing:0.12px;">0,000</span>
<span style="left:267.15px;top:228.00px;font-size:11px;line-height:13px;font-weight:normal;color:#000;letter-spacing:0.07px;">Aliq. Frete.</span>
<span style="left:403.15px;top:225.00px;font-size:11px;line-height:13px;font-weight:normal;color:#ACA899;letter-spacing:0.05px;">0,000</span>
<span style="left:7.4px;top:254.00px;font-size:11px;line-height:13px;font-weight:normal;color:#000;letter-spacing:-0.04px;">Status</span>
<span style="left:267.15px;top:254.00px;font-size:11px;line-height:13px;font-weight:normal;color:#000;letter-spacing:-0.01px;">Carga Tribut.</span>
<span style="left:403.15px;top:251.00px;font-size:11px;line-height:13px;font-weight:normal;color:#ACA899;letter-spacing:0.05px;">0,000</span>
<span style="left:18.15px;top:280.00px;font-size:11px;line-height:13px;font-weight:normal;color:#000;letter-spacing:-0.02px;">Crédito Outorgado</span>
<span style="left:121.15px;top:290.00px;font-size:11px;line-height:13px;font-weight:normal;color:#000;letter-spacing:0.13px;">Industria</span>
<span style="left:307.9px;top:291.00px;font-size:11px;line-height:13px;font-weight:normal;color:#000;letter-spacing:-0.15px;transform:scaleX(0.9777);">Comércio</span>
<span style="left:15.9px;top:310.00px;font-size:11px;line-height:13px;font-weight:normal;color:#000;letter-spacing:0.38px;">Interna</span>
<span style="left:129.4px;top:308.00px;font-size:11px;line-height:13px;font-weight:normal;color:#ACA899;letter-spacing:-0.13px;">0,00000</span>
<span style="left:14.9px;top:334.00px;font-size:11px;line-height:13px;font-weight:normal;color:#000;letter-spacing:0.11px;">Interestaduais</span>
<span style="left:122.4px;top:335.00px;font-size:11px;line-height:13px;font-weight:normal;color:#ACA899;letter-spacing:-0.13px;">0,000000</span>
<span style="left:208.9px;top:310.00px;font-size:11px;line-height:13px;font-weight:normal;color:#000;letter-spacing:0.38px;">Interna</span>
<span style="left:325.4px;top:308.00px;font-size:11px;line-height:13px;font-weight:normal;color:#ACA899;letter-spacing:-0.13px;">0,00000</span>
<span style="left:208.9px;top:337.00px;font-size:11px;line-height:13px;font-weight:normal;color:#000;letter-spacing:0.11px;">Interestaduais</span>
<span style="left:319.4px;top:334.00px;font-size:11px;line-height:13px;font-weight:normal;color:#ACA899;letter-spacing:-0.13px;">0,000000</span>
<span style="left:34.9px;top:379.00px;font-size:11px;line-height:13px;font-weight:normal;color:#000;letter-spacing:-0.14px;">Grupo</span>
<span style="left:101.4px;top:379.00px;font-size:11px;line-height:13px;font-weight:normal;color:#000;letter-spacing:-0.04px;">Cód.Rel</span>
<span style="left:168.9px;top:379.00px;font-size:11px;line-height:13px;font-weight:normal;color:#000;letter-spacing:-0.15px;transform:scaleX(0.9852);">Descrição</span>
<span style="left:301.9px;top:379.00px;font-size:11px;line-height:13px;font-weight:normal;color:#000;letter-spacing:-0.15px;transform:scaleX(0.9691);">Nome</span>
<span style="left:33.9px;top:396.00px;font-size:11px;line-height:13px;font-weight:normal;color:#000;letter-spacing:-0.15px;transform:scaleX(0.9987);">SATI0541</span>
<span style="left:100.9px;top:396.00px;font-size:11px;line-height:13px;font-weight:normal;color:#000;letter-spacing:-0.15px;transform:scaleX(0.9690);">001</span>
<span style="left:300.9px;top:396.00px;font-size:11px;line-height:13px;font-weight:normal;color:#000;letter-spacing:-0.1px;">Valor Adicionado - Entrada</span>
<span style="left:34.9px;top:413.00px;font-size:11px;line-height:13px;font-weight:normal;color:#000;letter-spacing:-0.15px;transform:scaleX(0.9987);">SATI0541</span>
<span style="left:101.9px;top:413.00px;font-size:11px;line-height:13px;font-weight:normal;color:#000;letter-spacing:-0.15px;transform:scaleX(0.9967);">002</span>
<span style="left:301.9px;top:413.00px;font-size:11px;line-height:13px;font-weight:normal;color:#000;letter-spacing:-0.15px;transform:scaleX(0.9894);">Valor Adicionado – Saída</span>
<span style="left:487.9px;top:106.00px;font-size:11px;line-height:13px;font-weight:normal;color:#ACA899;letter-spacing:0.18px;">Ajuste</span>
<span style="left:530.9px;top:106.00px;font-size:11px;line-height:13px;font-weight:normal;color:#ACA899;letter-spacing:-0.09px;">Observação</span>
<span style="left:602.9px;top:106.00px;font-size:11px;line-height:13px;font-weight:normal;color:#ACA899;letter-spacing:-0.15px;transform:scaleX(0.9248);">NCM X Filial</span>
<span style="left:673.15px;top:106.00px;font-size:11px;line-height:13px;font-weight:normal;color:#ACA899;letter-spacing:-0.15px;transform:scaleX(0.9515);">CFOP x Filial</span>
<span style="left:745.65px;top:106.00px;font-size:11px;line-height:13px;font-weight:normal;color:#ACA899;letter-spacing:-0.11px;">Serviço</span>
<span style="left:477.9px;top:126.00px;font-size:11px;line-height:13px;font-weight:normal;color:#ACA899;letter-spacing:-0.15px;transform:scaleX(0.9958);">Parceiro</span>
<span style="left:530.9px;top:126.00px;font-size:11px;line-height:13px;font-weight:normal;color:#ACA899;letter-spacing:-0.15px;transform:scaleX(0.9826);">Tipo de NF</span>
<span style="left:596.0px;top:126.00px;font-size:11px;line-height:13px;font-weight:normal;color:#ACA899;letter-spacing:-0.09px;">Conta Contábil</span>
<span style="left:678.9px;top:126.00px;font-size:11px;line-height:13px;font-weight:normal;color:#ACA899;letter-spacing:-0.06px;">Contas Relatório</span>
<span style="left:774.9px;top:126.00px;font-size:11px;line-height:13px;font-weight:normal;color:#ACA899;letter-spacing:0.29px;">IVA</span>
<span style="left:805.65px;top:126.00px;font-size:11px;line-height:13px;font-weight:normal;color:#ACA899;letter-spacing:0.18px;">Imposto</span>
<span style="left:466.0px;top:146.00px;font-size:11px;line-height:13px;font-weight:normal;color:#ACA899;letter-spacing:-0.02px;">Produto</span>
<span style="left:560.9px;top:146.00px;font-size:11px;line-height:13px;font-weight:normal;color:#ACA899;letter-spacing:-0.15px;transform:scaleX(0.8952);">UF</span>
<span style="left:586.0px;top:146.00px;font-size:11px;line-height:13px;font-weight:normal;color:#ACA899;letter-spacing:0.05px;">Sit.Tributária</span>
<span style="left:663.9px;top:146.00px;font-size:11px;line-height:13px;font-weight:normal;color:#ACA899;letter-spacing:-0.15px;transform:scaleX(0.9275);">Filiais</span>
<span style="left:700.65px;top:146.00px;font-size:11px;line-height:13px;font-weight:normal;color:#ACA899;letter-spacing:-0.15px;transform:scaleX(0.9490);">NCM</span>
<span style="left:520.15px;top:145.00px;font-size:11px;line-height:13px;font-weight:normal;color:#000;letter-spacing:-0.15px;transform:scaleX(0.9049);">CFOP</span>
<span style="left:464.9px;top:187.00px;font-size:11px;line-height:13px;font-weight:normal;color:#000;letter-spacing:-0.1px;">Parte</span>
<span style="left:497.2px;top:187.00px;font-size:11px;line-height:13px;font-weight:normal;color:#000;letter-spacing:-0.15px;transform:scaleX(0.9033);">CFOP</span>
<span style="left:464.9px;top:211.00px;font-size:11px;line-height:13px;font-weight:normal;color:#000;letter-spacing:-0.15px;transform:scaleX(0.9132);">CFOP</span>
<span style="left:591.15px;top:211.00px;font-size:11px;line-height:13px;font-weight:normal;color:#000;letter-spacing:-0.15px;transform:scaleX(0.9954);">Digito</span>
<span style="left:464.9px;top:233.00px;font-size:11px;line-height:13px;font-weight:normal;color:#000;letter-spacing:-0.15px;transform:scaleX(0.9747);">Descrição</span>
<span style="left:464.9px;top:256.00px;font-size:11px;line-height:13px;font-weight:normal;color:#000;letter-spacing:-0.15px;transform:scaleX(0.9646);">Vigência</span>
<span style="left:543.9px;top:255.00px;font-size:13px;line-height:15px;font-weight:normal;color:#9a9888;letter-spacing:2.08px;">/ /</span>
<span style="left:629.9px;top:255.00px;font-size:13px;line-height:15px;font-weight:normal;color:#9a9888;letter-spacing:2.08px;">/ /</span>
</div></body></html>
